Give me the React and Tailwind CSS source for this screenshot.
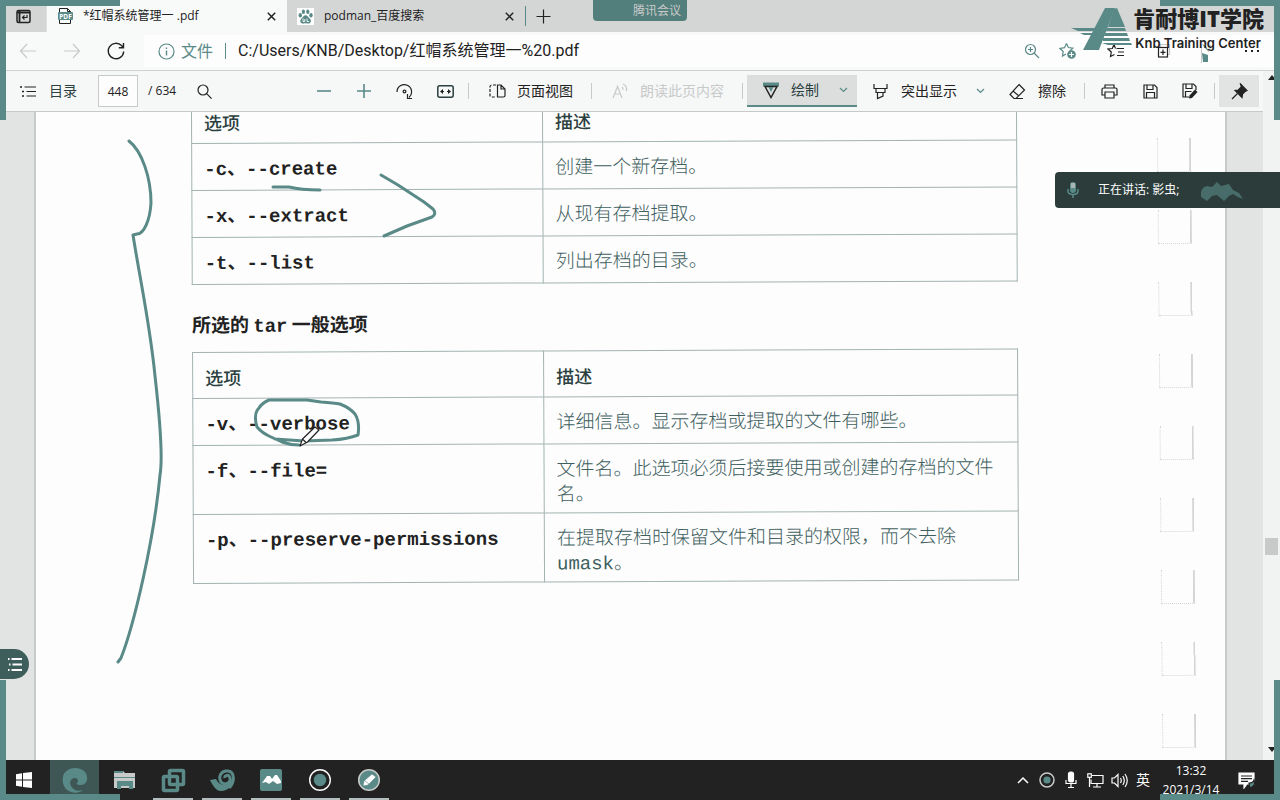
import React from "react";

const UI = "font-['Open_Sans','Noto_Sans_CJK_SC',sans-serif]";

function Icon({ label, w = 18, h = 18, className = "", children }) {
  return (
    <svg
      width={w}
      height={h}
      viewBox={`0 0 ${w} ${h}`}
      fill="none"
      stroke="currentColor"
      strokeWidth="1.2"
      aria-label={label}
      aria-hidden={label ? undefined : true}
      className={`shrink-0 ${className}`}
    >
      {children}
    </svg>
  );
}

function IconButton({ label, className = "", children }) {
  return (
    <button type="button" aria-label={label} className={`flex shrink-0 items-center justify-center ${className}`}>
      {children}
    </button>
  );
}

const Divider = ({ className = "" }) => <span className={`h-4 w-px shrink-0 bg-[#c8caca] ${className}`} />;

const Close = () => (
  <Icon w={9} h={9}>
    <path d="M0.8 0.8l7.4 7.4M8.2 0.8L0.8 8.2" strokeWidth="1.5" />
  </Icon>
);

const Chevron = () => (
  <Icon w={9} h={6} className="text-[#5a8a87]">
    <path d="M1 1l3.5 3.5L8 1" />
  </Icon>
);

function TabBar() {
  return (
    <div className="flex h-8 shrink-0 items-stretch bg-[#d4d6d6] text-xs text-[#222]">
      <IconButton label="标签页操作" className="w-[47px] border-r border-[#dfe1e1]">
        <Icon w={15} h={15}>
          <rect x="1" y="1.5" width="13" height="12" rx="1.5" strokeWidth="1.5" />
          <path d="M1 3.500h13M3.500 2v11" strokeWidth="1.8" />
          <path d="M11 6v2.500H6.500M8.500 6.500l-2 2 2 2" stroke="#222" />
        </Icon>
      </IconButton>
      <div className="flex w-60 items-center bg-[#f8f9f9] pl-2">
        <svg width="20" height="18" viewBox="0 0 20 18" className="shrink-0" aria-hidden="true">
          <path d="M4.500 5V1.500h8l3 3V5M4.500 13v3.500h11V13M12.500 1.500v3h3" fill="none" stroke="#222" />
          <rect x="3" y="5" width="15" height="8" rx="1" fill="#5a8a87" />
          <text x="10.500" y="11.500" fontSize="6.500" fontWeight="700" fill="#fdfdfd" textAnchor="middle" className={UI}>PDF</text>
        </svg>
        <span className="ml-2 flex-1 whitespace-pre">*红帽系统管理一 .pdf</span>
        <IconButton label="关闭标签页" className="mr-2 size-4"><Close /></IconButton>
      </div>
      <div className="flex w-[239px] items-center pl-2">
        <svg width="17" height="17" viewBox="0 0 17 17" className="ml-0.5 shrink-0" aria-hidden="true">
          <rect width="17" height="17" fill="#fdfdfd" />
          <g fill="#5a8a87">
            <ellipse cx="3.300" cy="7.300" rx="1.700" ry="2.200" />
            <ellipse cx="6.400" cy="3.700" rx="1.600" ry="2.300" />
            <ellipse cx="10.800" cy="3.700" rx="1.600" ry="2.300" />
            <ellipse cx="14" cy="7.300" rx="1.700" ry="2.200" />
            <path d="M8.600 7.200c1.600 0 2.200 1.400 3.300 2.500s2.300 1.800 2 3.500c-.3 2-2 2.600-3.600 2.200-1.200-.3-2.200-.3-3.400 0-1.600.4-3.400-.3-3.600-2.200-.2-1.700 1-2.400 2-3.500s1.700-2.500 3.300-2.500z" />
          </g>
          <path d="M6 10.500v3h1.800v-2.500M10 10.500v3h2" stroke="#fdfdfd" fill="none" strokeWidth="0.900" />
        </svg>
        <span className="ml-2.5 flex-1">podman_百度搜索</span>
        <IconButton label="关闭标签页" className="mr-2 size-4"><Close /></IconButton>
        <span className="h-5 w-px bg-[#5a8a87]" />
      </div>
      <IconButton label="新建标签页" className="w-[34px]">
        <Icon w={15} h={15}><path d="M7.500 0.500v14M0.500 7.500h14" /></Icon>
      </IconButton>
    </div>
  );
}

function AddressBar() {
  return (
    <div className="flex h-[39px] shrink-0 items-center border-b border-[#d0d2d2] bg-[#f8f9f9] pl-3.5 text-base text-[#222]">
      <IconButton label="后退" className="w-7 text-[#c8caca]">
        <Icon><path d="M8 2L1.500 9 8 16M1.500 9H17" /></Icon>
      </IconButton>
      <IconButton label="前进" className="ml-4 w-7 text-[#c8caca]">
        <Icon><path d="M10 2l6.500 7-6.500 7M16.500 9H1" /></Icon>
      </IconButton>
      <IconButton label="刷新" className="ml-4 w-7">
        <Icon><path d="M16.700 9.500A7.700 7.700 0 1 1 14.500 3.600L16.300 5.500M16.500 1v4.700h-4.700" strokeWidth="1.400" /></Icon>
      </IconButton>
      <div className="ml-3.5 flex h-8 flex-1 items-center bg-[#fdfdfd] pl-3.5">
        <Icon w={17} h={17} className="text-[#5a8a87]">
          <circle cx="8.500" cy="8.500" r="7.500" />
          <path d="M8.500 7.500v5M8.500 4.500v1.500" strokeWidth="1.400" />
        </Icon>
        <span className="ml-1.5 shrink-0 text-[#5a8a87]">文件</span>
        <span className="ml-3 h-4 w-px bg-[#5a8a87]" />
        <input aria-label="地址" defaultValue="C:/Users/KNB/Desktop/红帽系统管理一%20.pdf" className="ml-3 min-w-0 flex-1 bg-transparent font-['Roboto','Noto_Sans_CJK_SC',sans-serif] text-base outline-none" />
        <IconButton label="放大" className="w-6 text-[#5a8a87]">
          <Icon w={16} h={16}><circle cx="6.500" cy="6.500" r="5" /><path d="M10 10l5 5M4 6.500h5M6.500 4v5" /></Icon>
        </IconButton>
        <IconButton label="添加到收藏夹" className="ml-3 w-6 text-[#5a8a87]">
          <Icon w={18} h={18}>
            <path d="M7.500 1.500l1.900 4 4.400.6-3.200 3M7 12l-3.500 2 .7-4.500L1 6.500l4.500-.8 2-4.200" />
            <circle cx="12.500" cy="12.500" r="4.300" fill="#5a8a87" stroke="none" />
            <path d="M12.500 10v5M10 12.500h5" stroke="#fdfdfd" />
          </Icon>
        </IconButton>
        <IconButton label="收藏夹" className="ml-6 w-6">
          <Icon w={18} h={16}>
            <path d="M8.500 5.500L7 1.500 5.300 5.500 1 6l3.300 3-.8 4.500L7.500 11.500M9.500 5.500H17M11 9h6M10 12.500h7" />
          </Icon>
        </IconButton>
        <IconButton label="集锦" className="ml-6 w-6">
          <Icon w={14} h={16}>
            <path d="M3.500 4V1.500h9v10H11" stroke="#c8caca" /><rect x="1.500" y="4.500" width="9" height="9.500" /><path d="M6 6.500v5.500M3.500 9.300h5" />
          </Icon>
        </IconButton>
        <svg width="16" height="24" viewBox="0 0 16 24" className="ml-5 shrink-0" aria-hidden="true">
          <path d="M6 5q5 2 7 8l-4-4zM6 14l6 2v7H7z" fill="#5a8a87" />
          <path d="M5.500 8v16M7 2l8 5-2 5" stroke="#c8caca" fill="none" />
        </svg>
        <IconButton label="设置及其他" className="mr-4 ml-7 w-6">
          <Icon w={16} h={4}><path d="M1 2h2M7 2h2M13 2h2" strokeWidth="2" /></Icon>
        </IconButton>
      </div>
    </div>
  );
}

function Toolbar() {
  return (
    <div className="flex h-full min-w-0 flex-1 items-center border-b border-[#c8caca] bg-[#f6f7f7] pr-1 text-sm text-[#222]">
      <button type="button" className="ml-5 flex items-center gap-3">
        <Icon w={17} h={13}><path d="M4.500 2H16M6.500 6.500H16M6.500 11H16" /><path d="M0 2h2M2 6.500h2M2 11h2" strokeWidth="1.600" /></Icon>
        <span className="text-[#2b3f3e]">目录</span>
      </button>
      <label className="ml-[21px] flex items-center gap-2.5 text-xs">
        <input aria-label="页码" defaultValue="448" className="h-8 w-10 border border-[#c8caca] bg-[#fdfdfd] text-center text-xs outline-none" />
        / 634
      </label>
      <IconButton label="搜索" className="ml-5 w-4">
        <Icon w={15} h={15}><circle cx="6" cy="6" r="5" /><path d="M9.600 9.600l5 5" /></Icon>
      </IconButton>
      <span className="flex-1" />
      <IconButton label="缩小" className="w-4 text-[#5a8a87]"><Icon w={14} h={14}><path d="M0 7h14" strokeWidth="1.600" /></Icon></IconButton>
      <IconButton label="放大" className="ml-6 w-4 text-[#5a8a87]"><Icon w={14} h={14}><path d="M0 7h14M7 0v14" strokeWidth="1.600" /></Icon></IconButton>
      <IconButton label="旋转" className="ml-6 w-[17px]">
        <Icon w={17} h={17}><path d="M1 9A7.300 7.300 0 1 1 13 14.500M11.500 11v4.500h4.500" /><circle cx="8.500" cy="8.500" r="1.400" /></Icon>
      </IconButton>
      <IconButton label="适应宽度" className="ml-6 w-[17px]">
        <Icon w={17} h={13}><rect x="0.800" y="0.800" width="15.400" height="11.400" rx="2" stroke="#2b3f3e" strokeWidth="1.500" /><path d="M3 6.500l3-2.500v5zM14 6.500l-3-2.500v5z" fill="currentColor" stroke="none" /><path d="M5 6.500h2M10 6.500h2" /></Icon>
      </IconButton>
      <Divider className="ml-3.5" />
      <button type="button" className="ml-5 flex items-center gap-[11px]">
        <Icon w={17} h={14}><path d="M7 1H2.500A2 2 0 0 0 1 2.500v9A1.500 1.500 0 0 0 2.500 13H7" strokeDasharray="3 1.500" /><path d="M8.500 1h3.500l4 4v6.500a1.500 1.500 0 0 1-1.500 1.500h-6zM12 1v4h4" /></Icon>
        页面视图
      </button>
      <Divider className="ml-[18px]" />
      <button type="button" disabled className="ml-5 flex items-center gap-[11px] text-[#c8caca]">
        <Icon w={17} h={16}><path d="M1 15L5.500 3.500 10 15M2.500 11h6M10 4c1 .8 1.200 2 1 3M11 1c2.500 1 4 3.500 3.500 7" /></Icon>
        朗读此页内容
      </button>
      <Divider className="ml-[18px]" />
      <button type="button" className="ml-1 flex h-8 w-[110px] items-center border-b-2 border-[#5a8a87] bg-[#dcdede] pl-4">
        <Icon w={16} h={17}><path d="M0 0.500h16v4H0z" fill="#5a8a87" stroke="none" /><path d="M2 4.500L8 15.500l6-11z" strokeWidth="1.500" /><path d="M5.500 5h5L8 10z" fill="#5a8a87" stroke="none" /></Icon>
        <span className="ml-3 text-[#2b3f3e]">绘制</span>
        <span className="ml-5"><Chevron /></span>
      </button>
      <button type="button" className="ml-4 flex items-center">
        <Icon w={15} h={17}><path d="M1 1v4.500h13V1M3 5.500v4h9v-4M4.500 9.500V15.500l5.500-2.500v-3.500" /></Icon>
        <span className="ml-[13px]">突出显示</span>
        <span className="ml-[19px]"><Chevron /></span>
      </button>
      <button type="button" className="ml-6 flex items-center gap-3">
        <Icon w={17} h={17}><path d="M10 1.500l5.500 5.500-8.500 8.500H5L1 11.500 10 1.500zM4 8l6 5M5 15.500h9" /></Icon>
        擦除
      </button>
      <Divider className="ml-[18px]" />
      <IconButton label="打印" className="ml-4 w-[17px]">
        <Icon w={17} h={15}><path d="M4 4V1h9v3M4 11H1V5.500A1.500 1.500 0 0 1 2.500 4h12A1.500 1.500 0 0 1 16 5.500V11h-3M4 8h9v6H4z" /></Icon>
      </IconButton>
      <IconButton label="保存" className="ml-6 w-4">
        <Icon w={15} h={15}><path d="M1 1h10.500L14 3.500V14H1zM4 1v4.500h6V1M3.500 14V8.500h8V14" /></Icon>
      </IconButton>
      <IconButton label="另存为" className="ml-6 w-4">
        <Icon w={16} h={16}><path d="M7 14H1V1h10.500L14 3.500V7M4 1v4.500h6V1M3.500 14V8.500h6" /><path d="M7 15.500l.5-3 5.500-6 2.500 2.500-5.500 6z" fill="currentColor" stroke="none" /></Icon>
      </IconButton>
      <Divider className="ml-4" />
      <IconButton label="固定工具栏" className="ml-1 h-8 w-10 bg-[#e2e3e3]">
        <Icon w={17} h={17}><path d="M9.500 1l6.500 6.500-1.500.7-3 3-.5 3.300-7-7 3.300-.5 3-3z" fill="currentColor" /><path d="M6.500 10.500L1 16" /></Icon>
      </IconButton>
    </div>
  );
}

const operations = [
  ["-c、--create", "创建一个新存档。"],
  ["-x、--extract", "从现有存档提取。"],
  ["-t、--list", "列出存档的目录。"],
];

const general = [
  ["-v、--verbose", "详细信息。显示存档或提取的文件有哪些。"],
  ["-f、--file=", "文件名。此选项必须后接要使用或创建的存档的文件名。"],
  ["-p、--preserve-permissions", "在提取存档时保留文件和目录的权限，而不去除 umask。"],
];

function OptionTable({ rows }) {
  return (
    <table className="w-full table-fixed border-collapse text-[19px] leading-[25px]">
      <thead>
        <tr className="h-[46px] text-left align-middle text-lg leading-6 text-[#2b3f3e]">
          <th className="w-[351px] border border-[#a3b3b2] px-3 pt-2 font-medium">选项</th>
          <th className="border border-[#a3b3b2] px-3 pt-2 font-medium">描述</th>
        </tr>
      </thead>
      <tbody>
        {rows.map(([option, text]) => (
          <tr key={option} className="h-[47px] align-top">
            <td className="border border-[#a3b3b2] px-3 pt-3.5 pb-1 font-bold whitespace-nowrap">{option}</td>
            <td className="border border-[#a3b3b2] pt-3.5 pr-2 pb-1 pl-3 font-light text-[#3d605e]">{text}</td>
          </tr>
        ))}
      </tbody>
    </table>
  );
}

function Ink() {
  return (
    <svg className="pointer-events-none absolute inset-0 h-full w-full" aria-hidden="true">
      <g transform="translate(0 -112)" fill="none" stroke="#5a8a87" strokeWidth="3" strokeLinecap="round" strokeLinejoin="round">
        <path d="M129 141C142 151 151 178 151 203C150 220 144 234 137 234L133 235C141 285 150 325 155 376C160 420 163 458 160 475C154 540 134 625 121 658L118 662" />
        <path d="M273 187H289C297 189 303 190 320 190" />
        <path d="M381 175L398 185 424 202 433 209Q437 214 432 217L407 226 384 236" />
        <path d="M299 445Q290 445 282 442L271 437Q262 433 257 427Q253 414 259 408Q262 403 269 400H307L321 402Q334 403 340 404Q350 408 355 414Q360 422 358 435Q348 439 332 440L304 441 275 439" />
      </g>
      <g transform="translate(0 -112)" fill="#fdfdfd" stroke="#222" strokeWidth="1.200" strokeLinejoin="round">
        <path d="M300 446l2.500-7L315 427l4 3-11.500 12zM302.500 439l4 4" />
      </g>
    </svg>
  );
}

function Document() {
  return (
    <div className="relative flex min-h-0 flex-1 overflow-hidden bg-[#e2e3e3]">
      <main className="ml-[34px] flex min-w-0 flex-1 justify-between border-x-2 border-[#c8caca] bg-[#fdfdfd]">
        <div className="ml-[155px] w-[826px] origin-top-left -rotate-[0.25deg] font-['Liberation_Mono','Noto_Sans_CJK_SC',monospace] text-[#222]">
          <div className="-mt-[15px]">
            <OptionTable rows={operations} />
          </div>
          <h2 className="mt-[26px] mb-3 font-['Noto_Sans_CJK_SC',sans-serif] text-[19px] leading-[26px] font-bold">
            所选的 <span className="font-['Liberation_Mono',monospace]">tar</span> 一般选项
          </h2>
          <OptionTable rows={general} />
        </div>
        <div className="mt-[26px] mr-[34px] flex origin-top -rotate-[0.5deg] flex-col gap-[38px]">
          {Array.from({ length: 9 }, (_, i) => (
            <span key={i} className="h-[34px] w-[34px] shrink-0 border-r-2 border-b border-l border-dotted border-[#d4d6d6] [border-right-style:solid]" />
          ))}
        </div>
      </main>
      <div className="w-9 shrink-0" />
      <Ink />
      <button type="button" aria-label="打开目录" className="absolute top-[537px] left-0 flex h-[30px] w-[29px] items-center justify-center rounded-r-full bg-[#3e5e5c] text-[#fdfdfd]">
        <Icon w={16} h={15}><path d="M4.500 2H15M5.500 7.500H15M4.500 13H15M1 2h1.500M2 7.500h1.500M1 13h1.500" strokeWidth="2" /></Icon>
      </button>
    </div>
  );
}

function Scrollbar() {
  return (
    <div className="flex w-[17px] shrink-0 flex-col items-center bg-[#f1f2f2] pt-1 pb-2">
      <svg width="8" height="5" className="shrink-0" aria-hidden="true"><path d="M0 5l4-5 4 5z" fill="#222" /></svg>
      <span className="flex-[458]" />
      <span className="h-[17px] w-[13px] bg-[#c8caca]" />
      <span className="flex-[192]" />
      <svg width="8" height="5" className="shrink-0" aria-hidden="true"><path d="M0 0h8L4 5z" fill="#222" /></svg>
    </div>
  );
}

const apps = [
  {
    name: "Edge", active: true, running: false,
    art: <path d="M1 16C-1 6 6 1 13 1c8 0 13 5 12 12-1 4-4 5-7 5-2 0-4-1-3-2 2-2 1-5-2-5-4 0-6 4-4 8 2 4 7 6 12 4C15 28 3 26 1 16z" fill="#5a8a87" />,
  },
  {
    name: "文件资源管理器",
    art: <><path d="M3 4h9l2 2h10v15H3z" fill="#c8caca" /><path d="M3 4h9v2H3zM3 10h21v1H3z" fill="#5a8a87" /><path d="M6 14h16v8h-4v-3h-8v3H6z" fill="#5a8a87" /></>,
  },
  {
    name: "VMware", running: true,
    art: <><rect x="9.500" y="3.500" width="14" height="14" rx="1" fill="none" stroke="#5a8a87" strokeWidth="3.500" /><rect x="3.500" y="9.500" width="14" height="14" rx="1" fill="none" stroke="#5a8a87" strokeWidth="3.500" /></>,
  },
  {
    name: "远程终端", running: true,
    art: <><path d="M1 13l6-1c2 4 5 6 9 6 4-1 7-4 9-8 0 8-6 14-13 14-5 0-8-5-11-11z" fill="#5a8a87" /><path d="M20 21c6-6 6-16-1-17-7-1-10 6-7 11 4 4 10 1 9-4-1-4-6-3-5 0" fill="none" stroke="#5a8a87" strokeWidth="3" /></>,
  },
  {
    name: "图片查看器", running: true,
    art: <><rect x="2" y="2" width="22" height="22" rx="2" fill="#5a8a87" /><path d="M4 16l5-7h3l2 3 3-4h2l4 6v2l-4 1-4-3-4 3-3-2z" fill="#fdfdfd" /></>,
  },
  {
    name: "录屏", running: true,
    art: <><circle cx="13" cy="13" r="10.300" fill="#222" stroke="#fdfdfd" strokeWidth="1.400" /><circle cx="13" cy="13" r="6.200" fill="#5a8a87" /></>,
  },
  {
    name: "批注笔", running: true,
    art: <><circle cx="13" cy="13" r="10.300" fill="#5a8a87" stroke="#c8caca" strokeWidth="1.500" /><path d="M7 19l1-5 8-7 4 3-8 8zM9 14l4 3" fill="#fdfdfd" stroke="#5a8a87" strokeWidth="0.600" /></>,
  },
];

function Taskbar() {
  return (
    <footer className="flex h-10 shrink-0 items-stretch bg-[#222] text-[#fdfdfd]">
      <IconButton label="开始" className="w-[50px] pr-0.5">
        <svg width="16" height="16" viewBox="0 0 16 16" fill="currentColor" aria-hidden="true">
          <path d="M0 2.300L6 1.200v6.300H0zM7 1L16 0v7.500H7zM0 8.500h6v6.300l-6-1.100zM7 8.500h9V16l-9-1z" />
        </svg>
      </IconButton>
      {apps.map((app) => (
        <button key={app.name} type="button" aria-label={app.name} className={`relative flex w-[49px] shrink-0 items-center justify-center ${app.active ? "bg-[#3e5755]" : ""}`}>
          <svg width="26" height="26" viewBox="0 0 26 26" aria-hidden="true">{app.art}</svg>
          {app.running && <span className="absolute bottom-0 h-0.5 w-10 bg-[#b5bebe]" />}
        </button>
      ))}
      <div className="ml-auto flex items-center">
        <Icon label="显示隐藏的图标" w={12} h={8}><path d="M1 7l5-5 5 5" strokeWidth="1.500" /></Icon>
        <Icon w={16} h={16} className="ml-2.5"><circle cx="8" cy="8" r="7" stroke="#c8caca" strokeWidth="1.500" /><circle cx="8" cy="8" r="3.600" fill="#5a8a87" stroke="none" /></Icon>
        <Icon label="麦克风" w={12} h={18} className="ml-2.5"><rect x="3.500" y="1" width="5" height="10" rx="2" fill="currentColor" /><path d="M1 9v3.500h10V9M6 13v4M3 16.500h6" /></Icon>
        <Icon label="网络" w={17} h={15} className="ml-2.5"><path d="M5 2.500h11v8H4v-4M10 10.500V14M6 14h8" /><rect x="0.800" y="0.800" width="3.500" height="3.500" /><path d="M2.500 4v10" /></Icon>
        <Icon label="音量" w={17} h={15} className="ml-[7px]"><path d="M1 5h2.500L7 1.500v12L3.500 10H1zM9.500 5q1.500 2.500 0 5M11.800 3q3 4.500 0 9M14 1q4.500 6.500 0 13" /></Icon>
        <span className="ml-2 text-sm leading-5">英</span>
      </div>
      <time className="ml-2.5 flex w-[62px] flex-col items-center pt-px text-xs leading-[19px]">
        <span>13:32</span>
        <span>2021/3/14</span>
      </time>
      <IconButton label="通知" className="mr-6 ml-4 w-[18px]">
        <Icon w={18} h={17}><path d="M1 1h15v11H9l-3 4v-4H1z" fill="currentColor" /><path d="M3 4h11M3 6.700h11M3 9.400h7" stroke="#222" /><path d="M11 11q4 0 5-3 2 6-4 8z" fill="#5a8a87" stroke="#222" /></Icon>
      </IconButton>
    </footer>
  );
}

function Watermark() {
  return (
    <div className="pointer-events-none absolute top-[5px] right-4 flex items-start">
      <svg width="62" height="46" viewBox="0 0 62 46" aria-hidden="true">
        <path d="M0 23h29l-2 3H7zM9 28h17l-1 2H13z" fill="#5a8a87" />
        <path d="M34 3h10L28 45H12z" fill="#5a8a87" />
        <path d="M43 4l3-1 8 19H37z" fill="#5a8a87" />
        <path d="M36 23h18l1 3H35zM34 28h22l1 3H33zM32 33h26l1 3H32zM31 38h29l1 2H37z" fill="#5a8a87" />
      </svg>
      <div className="text-[#222]">
        <div className="text-[22px] leading-[27px] font-black">肯耐博IT学院</div>
        <div className="ml-0.5 font-['Inter',sans-serif] text-[13px] leading-[22px] font-semibold">Knb Training Center</div>
      </div>
    </div>
  );
}

function MeetingOverlays() {
  return (
    <>
      <div className="absolute top-0 left-1/2 -ml-[47px] flex h-[21px] w-[94px] items-center justify-end rounded-b bg-[#527e7b] pr-1.5 text-xs text-[#c8caca]">
        腾讯会议
      </div>
      <div className="absolute top-[172px] right-0 flex h-9 w-[225px] items-center rounded-l bg-[#2b3c3b] text-xs text-[#fdfdfd]">
        <svg width="12" height="16" viewBox="0 0 12 16" className="ml-3" aria-hidden="true">
          <rect x="3" y="0" width="6" height="11" rx="3" fill="#5a8a87" />
          <path d="M4 1h4v5H4z" fill="#a8b5b4" />
          <path d="M1 7v2q0 3.500 5 3.500T11 9V7M6 12v4" stroke="#5a8a87" strokeWidth="1.500" fill="none" />
        </svg>
        <span className="ml-[19px]">正在讲话: 影虫;</span>
        <svg width="44" height="22" viewBox="0 0 44 22" className="ml-[22px]" aria-hidden="true">
          <path d="M0 13q1-5 6-6l5 1 5-5 4 4 8-2 4 6 6 3 4 6-5-2-5-3-4 2-5 5-7-6-5 1-5 5-6-4z" fill="#476c6a" />
        </svg>
      </div>
    </>
  );
}

function Corners() {
  return (
    <div className="pointer-events-none absolute inset-0" aria-hidden="true">
      <span className="absolute top-0 left-0 size-[120px] border-t-[6px] border-l-[6px] border-[#5a8a87]" />
      <span className="absolute top-0 right-0 size-[120px] border-t-[6px] border-r-[6px] border-[#5a8a87]" />
      <span className="absolute bottom-0 left-0 size-[120px] border-b-[6px] border-l-[6px] border-[#5a8a87]" />
      <span className="absolute right-0 bottom-0 size-[120px] border-r-[6px] border-b-[6px] border-[#5a8a87]" />
    </div>
  );
}

export default function App() {
  return (
    <div className={`relative flex h-screen flex-col overflow-hidden bg-[#fdfdfd] ${UI}`}>
      <TabBar />
      <AddressBar />
      <div className="flex min-h-0 flex-1">
        <div className="flex min-w-0 flex-1 flex-col">
          <div className="h-[41px] shrink-0"><Toolbar /></div>
          <Document />
        </div>
        <Scrollbar />
      </div>
      <Taskbar />
      <MeetingOverlays />
      <Watermark />
      <Corners />
    </div>
  );
}
